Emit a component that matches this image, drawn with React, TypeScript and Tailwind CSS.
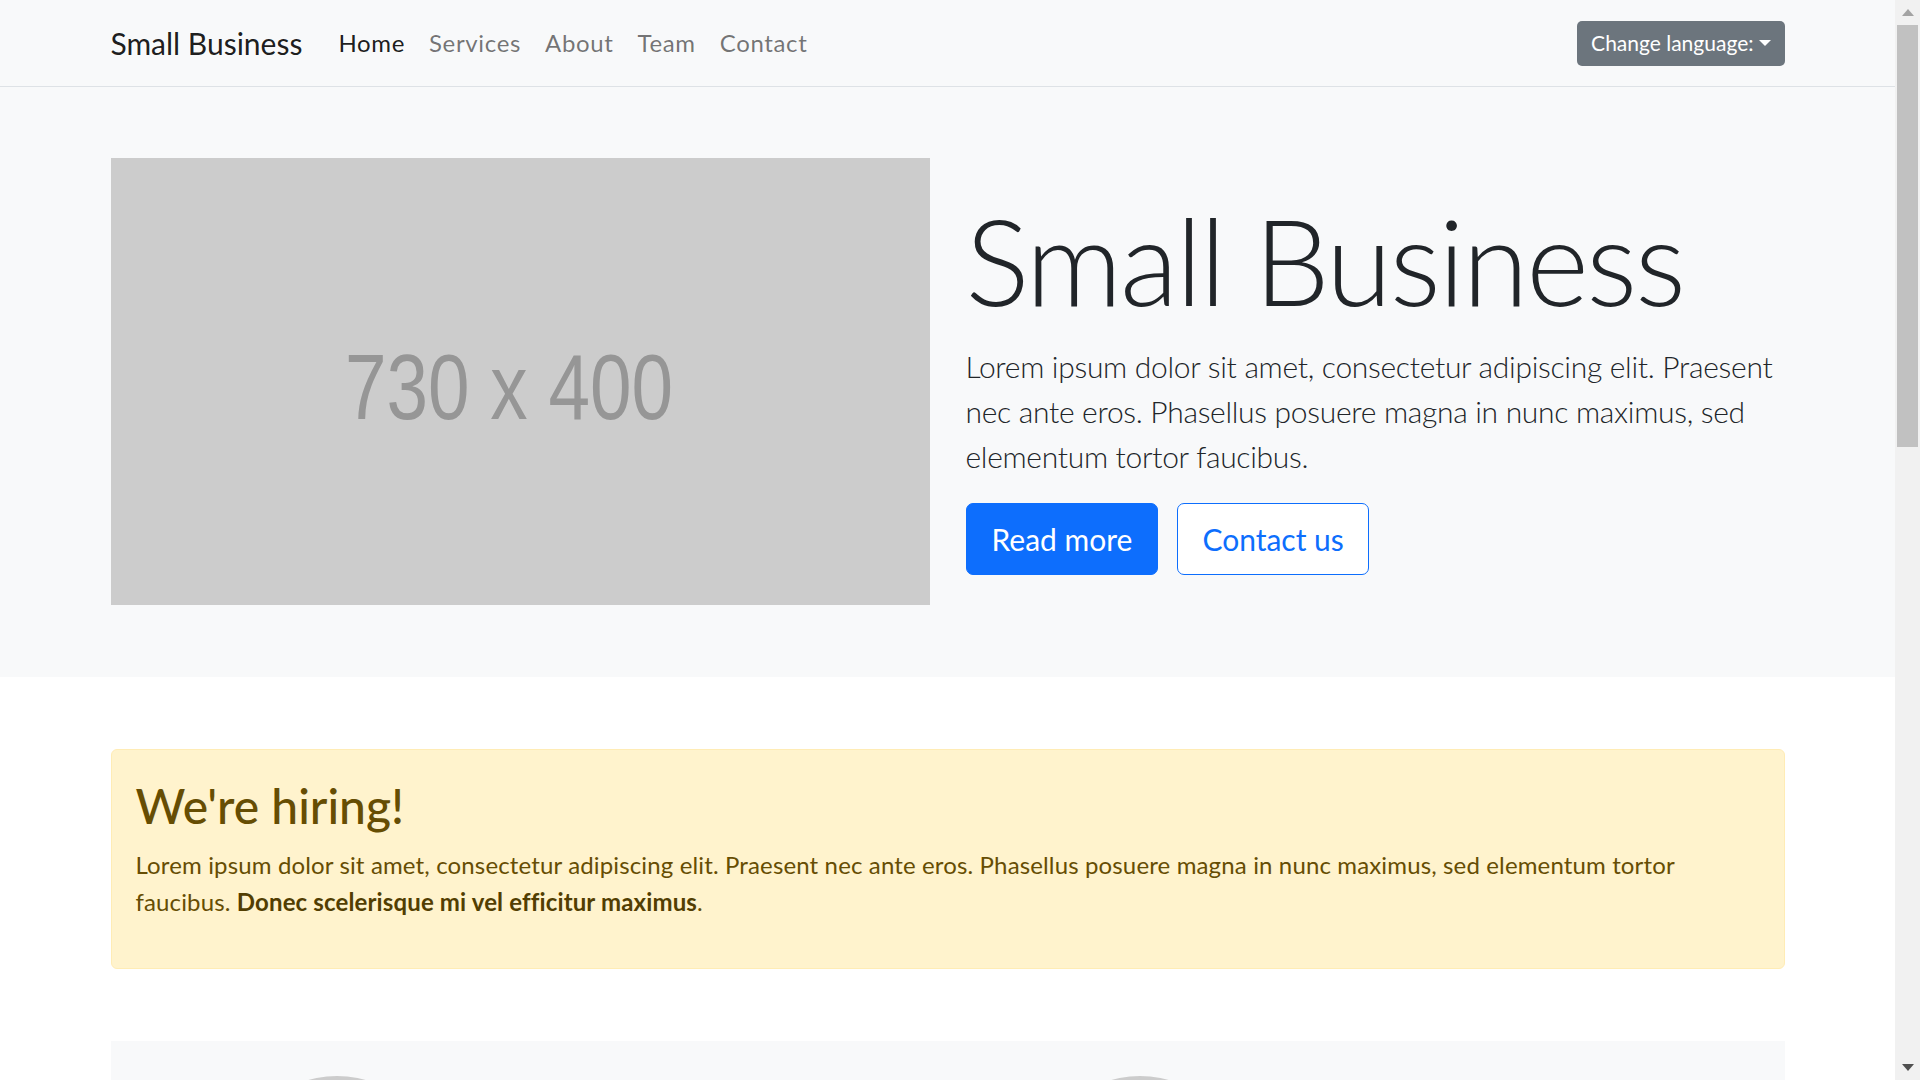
const navLinks = ['Home', 'Services', 'About', 'Team', 'Contact']

function Navbar() {
  return (
    <nav className="h-[87px] bg-[#f8f9fa] border-b border-[#dee2e6]">
      <div className="mx-auto w-[1710px] px-[18px] h-full flex items-center justify-between">
        <div className="flex items-center">
          <a href="#" className="text-[30px] leading-[45px] text-black/90 mr-[24px]">
            Small Business
          </a>
          <ul className="flex items-center">
            {navLinks.map((link, i) => (
              <li key={link}>
                <a
                  href="#"
                  className={
                    i === 0
                      ? 'block px-[12px] text-[24px] leading-[36px] tracking-[0.65px] text-black/90'
                      : 'block px-[12px] text-[24px] leading-[36px] tracking-[0.65px] text-black/55'
                  }
                >
                  {link}
                </a>
              </li>
            ))}
          </ul>
        </div>
        <button className="flex items-center h-[45px] px-[14px] rounded-[5px] bg-[#6c757d] text-white text-[21px]">
          Change language:
          <span className="ml-[5px] w-0 h-0 border-l-[6px] border-r-[6px] border-t-[6px] border-l-transparent border-r-transparent border-t-white" />
        </button>
      </div>
    </nav>
  )
}

function Placeholder() {
  return (
    <div className="w-[819px] h-[447px] bg-[#cccccc] shrink-0">
      <svg width="819" height="447" viewBox="0 0 819 447">
        <text
          x="398"
          y="261"
          textAnchor="middle"
          fontFamily="Liberation Sans, Arial, sans-serif"
          fontSize="93"
          fill="#969696"
          textLength="328"
          lengthAdjust="spacingAndGlyphs"
        >
          730 x 400
        </text>
      </svg>
    </div>
  )
}

function Hero() {
  return (
    <section className="bg-[#f8f9fa] pt-[71px] pb-[72px]">
      <div className="mx-auto w-[1710px] px-[18px] flex items-center gap-[36px]">
        <Placeholder />
        <div className="w-[819px]">
          <h1 className="text-[120px] font-light leading-[144px] tracking-[-2.4px] mb-[12px] text-[#212529]">
            Small Business
          </h1>
          <p className="text-[30px] font-light leading-[45px] tracking-[-0.3px] whitespace-nowrap mb-[24px] text-[#212529]">
            Lorem ipsum dolor sit amet, consectetur adipiscing elit. Praesent
            <br />
            nec ante eros. Phasellus posuere magna in nunc maximus, sed
            <br />
            elementum tortor faucibus.
          </p>
          <div className="flex gap-[19px]">
            <a
              href="#"
              className="h-[72px] px-[25px] flex items-center rounded-[7px] bg-[#0d6efd] border-[1.5px] border-[#0d6efd] text-white text-[30px]"
            >
              Read more
            </a>
            <a
              href="#"
              className="h-[72px] px-[24px] flex items-center rounded-[7px] bg-white border-[1.5px] border-[#0d6efd] text-[#0d6efd] text-[30px]"
            >
              Contact us
            </a>
          </div>
        </div>
      </div>
    </section>
  )
}

function HiringAlert() {
  return (
    <div className="mx-auto w-[1710px] px-[18px] mt-[72px]">
      <div className="bg-[#fff3cd] border-[1.5px] border-[#ffecb5] rounded-[6px] p-[24px] text-[#664d03]">
        <h2 className="text-[48px] font-medium leading-[60px] mt-[2px] mb-[10px]">We're hiring!</h2>
        <p className="text-[24px] leading-[37px] tracking-[0.14px] mb-[24px]">
          Lorem ipsum dolor sit amet, consectetur adipiscing elit. Praesent nec ante eros. Phasellus posuere magna in nunc maximus, sed elementum tortor
          <br />
          faucibus. <strong className="font-bold text-[#523e02]">Donec scelerisque mi vel efficitur maximus</strong>.
        </p>
      </div>
    </div>
  )
}

function Features() {
  return (
    <div className="mx-auto w-[1710px] px-[18px] mt-[72px]">
      <div className="bg-[#f8f9fa] h-[300px] pt-[35px] flex">
        <div className="ml-[121px] w-[210px] h-[210px] rounded-full bg-[#cccccc] shrink-0" />
        <div className="ml-[593px] w-[210px] h-[210px] rounded-full bg-[#cccccc] shrink-0" />
      </div>
    </div>
  )
}

function Scrollbar() {
  return (
    <div className="w-[25px] h-full bg-[#f1f1f1] flex flex-col items-center shrink-0">
      <div className="h-[25px] flex items-center justify-center">
        <svg width="12" height="7" viewBox="0 0 12 7">
          <polygon points="6,0 12,7 0,7" fill="#a3a3a3" />
        </svg>
      </div>
      <div className="w-[21px] h-[422px] bg-[#c1c1c1]" />
      <div className="flex-1" />
      <div className="h-[25px] flex items-center justify-center">
        <svg width="12" height="7" viewBox="0 0 12 7">
          <polygon points="0,0 12,0 6,7" fill="#505050" />
        </svg>
      </div>
    </div>
  )
}

export default function App() {
  return (
    <div className="flex h-screen overflow-hidden bg-white font-['Lato',sans-serif] text-[#212529]">
      <div className="flex-1 min-w-0">
        <Navbar />
        <Hero />
        <HiringAlert />
        <Features />
      </div>
      <Scrollbar />
    </div>
  )
}
